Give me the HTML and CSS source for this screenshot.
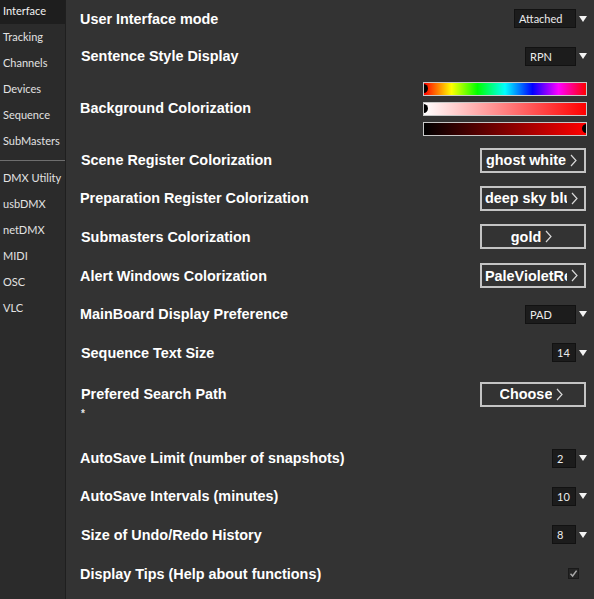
FILE: index.html
```html
<!DOCTYPE html>
<html>
<head>
<meta charset="utf-8">
<link rel="stylesheet" href="styles.css">
</head>
<body>
<div class="app">
  <nav class="side">
    <div class="item active">Interface</div>
    <div class="item">Tracking</div>
    <div class="item">Channels</div>
    <div class="item">Devices</div>
    <div class="item">Sequence</div>
    <div class="item">SubMasters</div>
    <div class="sep"></div>
    <div class="item">DMX Utility</div>
    <div class="item">usbDMX</div>
    <div class="item">netDMX</div>
    <div class="item">MIDI</div>
    <div class="item">OSC</div>
    <div class="item">VLC</div>
  </nav>
  <main class="main">
    <div class="row r1">
      <span class="label">User Interface mode</span>
      <div class="select"><span class="box w62">Attached</span><span class="arrow"></span></div>
    </div>
    <div class="row r2">
      <span class="label l1">Sentence Style Display</span>
      <div class="select"><span class="box w51">RPN</span><span class="arrow"></span></div>
    </div>
    <div class="row r3">
      <span class="label">Background Colorization</span>
      <div class="bars">
        <div class="bar hue"><span class="knob left"></span></div>
        <div class="bar sat"><span class="knob left"></span></div>
        <div class="bar val"><span class="knob right"></span></div>
      </div>
    </div>
    <div class="row r4">
      <span class="label l1">Scene Register Colorization</span>
      <div class="btn"><span class="txt">ghost white</span><svg class="chev" width="7" height="13" viewBox="0 0 7 13"><polyline points="1,1 6,6.5 1,12" fill="none" stroke="#d8d8d8" stroke-width="1.2"/></svg></div>
    </div>
    <div class="row r5">
      <span class="label">Preparation Register Colorization</span>
      <div class="btn"><span class="txt">deep sky blue</span><svg class="chev" width="7" height="13" viewBox="0 0 7 13"><polyline points="1,1 6,6.5 1,12" fill="none" stroke="#d8d8d8" stroke-width="1.2"/></svg></div>
    </div>
    <div class="row r6">
      <span class="label l1">Submasters Colorization</span>
      <div class="btn"><span class="txt">gold</span><svg class="chev" width="7" height="13" viewBox="0 0 7 13"><polyline points="1,1 6,6.5 1,12" fill="none" stroke="#d8d8d8" stroke-width="1.2"/></svg></div>
    </div>
    <div class="row r7">
      <span class="label">Alert Windows Colorization</span>
      <div class="btn"><span class="txt">PaleVioletRed</span><svg class="chev" width="7" height="13" viewBox="0 0 7 13"><polyline points="1,1 6,6.5 1,12" fill="none" stroke="#d8d8d8" stroke-width="1.2"/></svg></div>
    </div>
    <div class="row r8">
      <span class="label">MainBoard Display Preference</span>
      <div class="select"><span class="box w51">PAD</span><span class="arrow"></span></div>
    </div>
    <div class="row r9">
      <span class="label l1">Sequence Text Size</span>
      <div class="select"><span class="box w24">14</span><span class="arrow"></span></div>
    </div>
    <div class="row r10">
      <span class="label l1">Prefered Search Path</span>
      <div class="btn"><span class="txt">Choose</span><svg class="chev" width="7" height="13" viewBox="0 0 7 13"><polyline points="1,1 6,6.5 1,12" fill="none" stroke="#d8d8d8" stroke-width="1.2"/></svg></div>
    </div>
    <div class="path">*</div>
    <div class="row r11">
      <span class="label">AutoSave Limit (number of snapshots)</span>
      <div class="select"><span class="box w24">2</span><span class="arrow"></span></div>
    </div>
    <div class="row r12">
      <span class="label">AutoSave Intervals (minutes)</span>
      <div class="select"><span class="box w24">10</span><span class="arrow"></span></div>
    </div>
    <div class="row r13">
      <span class="label l1">Size of Undo/Redo History</span>
      <div class="select"><span class="box w24">8</span><span class="arrow"></span></div>
    </div>
    <div class="row r14">
      <span class="label">Display Tips (Help about functions)</span>
      <span class="check"><svg width="9" height="9" viewBox="0 0 9 9"><polyline points="1.5,4.8 3.6,7 7.6,1.6" fill="none" stroke="#a8a8a8" stroke-width="1.5"/></svg></span>
    </div>
  </main>
</div>
</body>
</html>
```

FILE: styles.css
```css
html, body {
  margin: 0;
  padding: 0;
  background: #333333;
}
.app {
  display: flex;
  width: 594px;
  height: 599px;
  overflow: hidden;
}
.side {
  width: 65px;
  flex: 0 0 65px;
  background: #2b2b2b;
  border-right: 1px solid #1f1f1f;
  display: flex;
  flex-direction: column;
  gap: 2px;
  font-family: Lato, "Liberation Sans", sans-serif;
  font-size: 11px;
  color: #e2e2e2;
}
.item {
  height: 24px;
  line-height: 22px;
  padding-left: 3px;
  white-space: nowrap;
}
.item.active {
  background: #1e1e1e;
  color: #f2f2f2;
}
.sep {
  height: 1px;
  background: #6e6e6e;
  margin: 4px 0 4px 0;
}
.main {
  flex: 1;
  display: flex;
  flex-direction: column;
  padding: 0 7px 0 14px;
  font-family: "Liberation Sans", Arial, sans-serif;
  color: #ffffff;
}
.row {
  display: flex;
  align-items: center;
  justify-content: space-between;
}
.r1 { height: 37px; }
.r2 { height: 38px; }
.r3 { height: 66px; }
.r4 { height: 38px; }
.r5 { height: 38px; }
.r6 { height: 39px; }
.r7 { height: 39px; }
.r8 { height: 38px; }
.r9 { height: 39px; }
.r10 { height: 38px; margin-top: 3px; }
.r11 { height: 38px; margin-top: 19px; }
.r12 { height: 38px; }
.r13 { height: 39px; }
.r14 { height: 39px; }
.label {
  font-weight: bold;
  font-size: 14.4px;
  white-space: nowrap;
}
.l1 { padding-left: 1px; }
.path {
  height: 12px;
  line-height: 12px;
  margin-top: -5px;
  font-size: 10px;
  font-weight: bold;
  color: #e6e6e6;
  padding-left: 1px;
}
.select {
  display: flex;
  align-items: center;
}
.box {
  box-sizing: border-box;
  height: 19px;
  line-height: 17px;
  background: #1c1c1c;
  border: 1px solid #121212;
  padding-left: 4px;
  font-family: Lato, "Liberation Sans", sans-serif;
  font-size: 11px;
  color: #ececec;
}
.w62 { width: 62px; }
.w51 { width: 51px; }
.w24 { width: 24px; }
.arrow {
  width: 0;
  height: 0;
  margin-left: 3px;
  border-left: 4px solid transparent;
  border-right: 4px solid transparent;
  border-top: 6px solid #f4f4f4;
}
.bars {
  display: flex;
  flex-direction: column;
  gap: 6px;
  padding-top: 1px;
}
.bar {
  position: relative;
  box-sizing: border-box;
  width: 164px;
  height: 14px;
  border: 1px solid #c8c8c8;
  overflow: hidden;
}
.hue {
  background: linear-gradient(to right, #ff0000, #ffff00 17%, #00ff00 33%, #00ffff 50%, #0000ff 67%, #ff00ff 83%, #ff0000);
}
.sat {
  background: linear-gradient(to right, #ffffff, #ff0000);
}
.val {
  background: linear-gradient(to right, #000000, #ff0000);
}
.knob {
  position: absolute;
  top: 1px;
  width: 9px;
  height: 9px;
  border-radius: 50%;
  background: #000;
}
.knob.left { left: -5px; }
.knob.right { right: -5px; }
.btn {
  box-sizing: border-box;
  width: 106px;
  height: 25px;
  margin-right: 1px;
  border: 2px solid #c4c4c4;
  background: #333333;
  display: flex;
  align-items: center;
  justify-content: center;
  gap: 4px;
  padding: 0 6px 0 3px;
  font-weight: bold;
  font-size: 14.4px;
  color: #ffffff;
}
.txt {
  flex: 0 1 auto;
  min-width: 0;
  overflow: hidden;
  white-space: nowrap;
}
.chev {
  flex: 0 0 auto;
  display: block;
}
.check {
  box-sizing: border-box;
  width: 11px;
  height: 11px;
  margin-right: 8px;
  background: #252525;
  border: 1px solid #1a1a1a;
  display: flex;
  align-items: center;
  justify-content: center;
}
.check svg { display: block; }
```
